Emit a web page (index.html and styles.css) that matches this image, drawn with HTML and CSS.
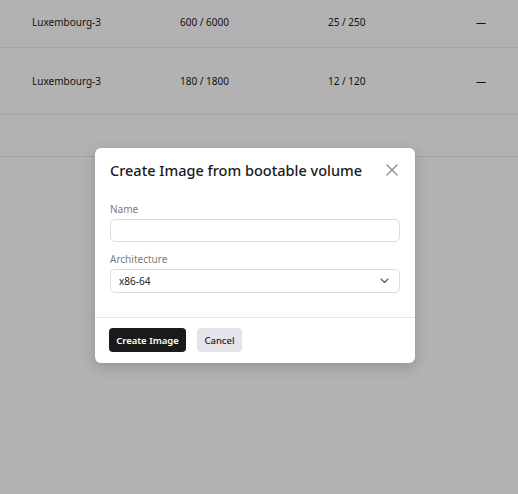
FILE: index.html
```html
<!DOCTYPE html>
<html lang="en">
<head>
<meta charset="utf-8">
<title>Create Image from bootable volume</title>
<link rel="stylesheet" href="styles.css">
</head>
<body>
<div class="page">
  <div class="quota-row row-first">
    <span>Luxembourg-3</span>
    <span>600 / 6000</span>
    <span>25 / 250</span>
    <span>—</span>
  </div>
  <div class="quota-row">
    <span>Luxembourg-3</span>
    <span>180 / 1800</span>
    <span>12 / 120</span>
    <span>—</span>
  </div>
  <div class="table-footer"></div>
</div>

<div class="overlay">
  <div class="dialog" role="dialog" aria-labelledby="dlg-title">
    <div class="dialog-body">
      <div class="dialog-header">
        <h2 id="dlg-title" class="dialog-title">Create Image from bootable volume</h2>
        <button class="close-btn" aria-label="Close">
          <svg width="12" height="12" viewBox="0 0 12 12"><path d="M1 1 L11 11 M11 1 L1 11" stroke="#8a8a8a" stroke-width="1.3" fill="none" stroke-linecap="round"/></svg>
        </button>
      </div>
      <div class="field">
        <label class="field-label">Name</label>
        <div class="input"></div>
      </div>
      <div class="field">
        <label class="field-label">Architecture</label>
        <div class="input select">
          <span>x86-64</span>
          <svg width="9" height="6" viewBox="0 0 9 6"><path d="M1 1 L4.5 4.5 L8 1" stroke="#555" stroke-width="1.1" fill="none" stroke-linecap="round" stroke-linejoin="round"/></svg>
        </div>
      </div>
    </div>
    <div class="dialog-footer">
      <button class="btn btn-primary">Create Image</button>
      <button class="btn btn-secondary">Cancel</button>
    </div>
  </div>
</div>
</body>
</html>
```

FILE: styles.css
```css
html, body {
  margin: 0;
  padding: 0;
}
body {
  width: 518px;
  height: 494px;
  overflow: hidden;
  background: #ffffff;
  font-family: "Noto Sans", "Open Sans", sans-serif;
  color: #1a1a1a;
  position: relative;
}
.page {
  margin-top: -11px;
}
.quota-row {
  display: grid;
  grid-template-columns: 148px 148px 148px 1fr;
  align-items: center;
  height: 66px;
  padding-left: 32px;
  border-bottom: 1px solid #ebebeb;
  font-size: 10px;
}
.quota-row.row-first {
  height: 50px;
  padding-top: 8px;
}
.table-footer {
  height: 41px;
  border-bottom: 1px solid #ebebeb;
}
.overlay {
  position: absolute;
  inset: 0;
  background: rgba(0, 0, 0, 0.3);
}
.dialog {
  position: absolute;
  left: 95px;
  top: 148px;
  width: 320px;
  background: #ffffff;
  border-radius: 6px;
  box-shadow: 0 4px 14px rgba(0, 0, 0, 0.18);
}
.dialog-body {
  padding: 11px 15px 24px;
  border-bottom: 1px solid #e6e6e6;
}
.dialog-header {
  display: flex;
  align-items: center;
  justify-content: space-between;
  height: 22px;
  margin-bottom: 20px;
}
.dialog-title {
  margin: 0;
  font-size: 14.5px;
  font-weight: 500;
  line-height: 22px;
  white-space: nowrap;
  color: #1a1a1a;
}
.close-btn {
  border: 0;
  background: none;
  padding: 0;
  margin-right: 1px;
  width: 14px;
  height: 14px;
  display: flex;
  align-items: center;
  justify-content: center;
}
.field + .field {
  margin-top: 9px;
}
.field-label {
  display: block;
  font-size: 10px;
  line-height: 16px;
  color: #7a7a7a;
  margin-bottom: 2px;
}
.input {
  box-sizing: border-box;
  height: 23px;
  border: 1px solid #dcdcdc;
  border-radius: 5px;
}
.select {
  height: 24px;
  display: flex;
  align-items: center;
  justify-content: space-between;
  padding: 0 10px 0 8px;
  font-size: 10px;
  color: #222;
}
.dialog-footer {
  display: flex;
  gap: 11px;
  padding: 10px 14px 11px;
}
.btn {
  height: 24px;
  border: 0;
  border-radius: 4px;
  font-family: inherit;
  font-size: 9.5px;
  font-weight: 600;
  padding: 0;
  white-space: nowrap;
}
.btn-primary {
  background: #1a1a1a;
  color: #ffffff;
  width: 77px;
}
.btn-secondary {
  background: #e6e4ea;
  color: #222;
  font-weight: 500;
  width: 45px;
}
```
